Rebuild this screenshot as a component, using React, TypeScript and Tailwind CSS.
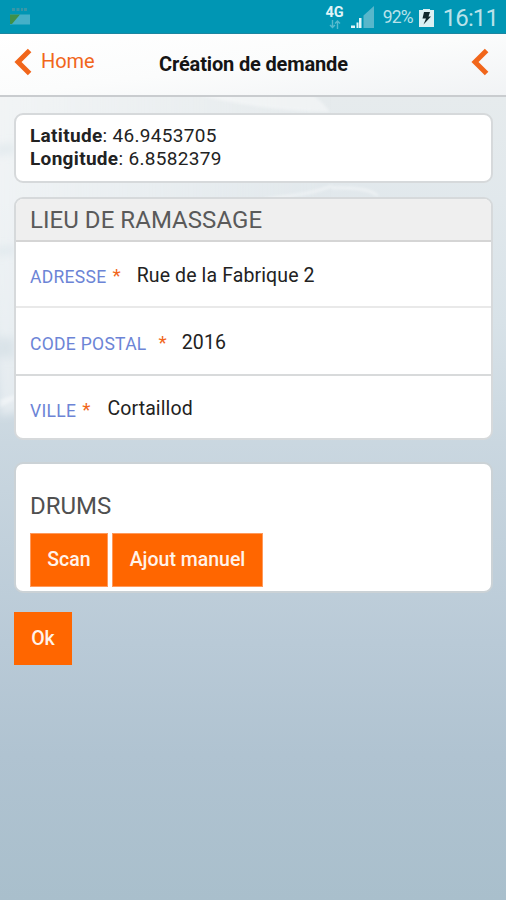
import { useState } from "react";

const fields = [
  { label: "ADRESSE", value: "Rue de la Fabrique 2", row: "h-[66px] border-b-2 border-[#e9e9e9]", gap: "ml-[6px]", valueGap: "ml-[16px]" },
  { label: "CODE POSTAL", value: "2016", row: "h-[68px] border-b-2 border-[#d8dadb]", gap: "ml-[12px]", valueGap: "ml-[15px]" },
  { label: "VILLE", value: "Cortaillod", row: "h-[63px]", gap: "ml-[6px]", valueGap: "ml-[17px]" },
];

function Chevron() {
  return (
    <svg width="18" height="28" viewBox="0 0 18 28" fill="none" stroke="#f1661b" strokeWidth="5">
      <path d="M15.6 2.4 L4 14 L15.6 25.6" />
    </svg>
  );
}

function StatusBar() {
  return (
    <div className="flex h-[34px] items-center border-b border-[#1c86a0] bg-[#0096b4] pl-[9px] pr-[8px] text-[#b9e2ea]">
      <svg width="22" height="20" viewBox="0 0 22 20">
        <path d="M3 1h3v3h-3zM7.500 1h3v3h-3zM12 1h2v3h-2zM15 1h3v3h-3z" fill="#5e98a0" opacity=".6" />
        <path d="M1 7.500h20v10H1z" fill="#45b0c8" />
        <path d="M1 7.500h10l-8 9.500H1z" fill="#3f9048" />
      </svg>
      <div className="ml-auto flex flex-col items-center">
        <span className="text-[14.500px] font-bold leading-[15px] text-[#dff4f8]">4G</span>
        <svg width="12" height="9" viewBox="0 0 12 9" fill="none" stroke="#58bacd" strokeWidth="1.400">
          <path d="M3.500 0v7.500M1 5l2.500 2.500L6 5M8.500 9V1M6 3.500L8.500 1 11 3.500" />
        </svg>
      </div>
      <svg className="ml-[7px] mt-[2px]" width="24" height="23" viewBox="0 0 24 23">
        <path d="M12.500 22V9.500L23 0v22z" fill="#58b7cb" />
        <path d="M0 19.500h4V22H0zM5.500 16.500h2V22h-2zM8 12h2.500v10h-2.500z" fill="#e4f6f9" />
      </svg>
      <span className="ml-[8px] mt-[2px] text-[17.500px] tracking-[-0.8px]">92%</span>
      <svg className="ml-[6px] mt-[2px]" width="15" height="18" viewBox="0 0 15 18">
        <path d="M0 1h4V0h7v1h4v17H0z" fill="#dcf0f3" />
        <path d="M5 3h6L9.500 7.500H12L4.500 15.500 7 9.500H3.500z" fill="#10272c" />
      </svg>
      <span className="ml-[9px] mt-[2px] text-[24px] leading-[32px] tracking-[-0.9px]">16:11</span>
    </div>
  );
}

function Backdrop() {
  return (
    <svg className="absolute inset-0 h-full w-full" viewBox="0 0 506 804" preserveAspectRatio="none">
      <defs>
        <linearGradient id="sky" x1="0" y1="0" x2="0" y2="1">
          <stop offset="0" stopColor="#e6ebed" />
          <stop offset=".13" stopColor="#e1e8ec" />
          <stop offset=".28" stopColor="#d8e2e8" />
          <stop offset=".43" stopColor="#cad7e0" />
          <stop offset=".68" stopColor="#b9cad7" />
          <stop offset=".82" stopColor="#b0c3d1" />
          <stop offset="1" stopColor="#a9bfcc" />
        </linearGradient>
        <linearGradient id="glow" x1="0" y1="0" x2="1" y2="0">
          <stop offset="0" stopColor="#fff" stopOpacity=".5" />
          <stop offset="1" stopColor="#fff" stopOpacity="0" />
        </linearGradient>
        <filter id="soft" x="-20%" y="-20%" width="140%" height="140%">
          <feGaussianBlur stdDeviation="4" />
        </filter>
        <filter id="haze" x="-20%" y="-50%" width="140%" height="200%">
          <feGaussianBlur stdDeviation="1.5" />
        </filter>
      </defs>
      <path d="M0 0h506v804H0z" fill="url(#sky)" />
      <path d="M-20 -10H330V240L0 320z" fill="url(#glow)" filter="url(#soft)" />
      <path d="M190 -4H310Q322 4 330 15 260 14 190 -4z" fill="#fff" opacity=".4" filter="url(#haze)" />
      <path d="M265 102Q310 98 332 89M332 91Q368 90 378 99" fill="none" stroke="#fff" strokeWidth="2" opacity=".6" filter="url(#haze)" />
      <g fill="none" stroke="#c5d4dd" filter="url(#soft)">
        <path d="M-5 54L15 51" strokeWidth="10" opacity=".3" />
        <path d="M-5 155L15 153" strokeWidth="8" opacity=".3" />
        <path d="M-5 250L15 252" strokeWidth="20" opacity=".4" />
      </g>
      <path d="M0 303L15 298V303L0 311z" fill="#fff" opacity=".4" filter="url(#haze)" />
    </svg>
  );
}

export default function App() {
  const [address, setAddress] = useState(fields);

  const updateField = (label: string, value: string) =>
    setAddress((current) => current.map((field) => (field.label === label ? { ...field, value } : field)));

  return (
    <div className="flex h-[900px] w-[506px] flex-col overflow-hidden font-[Roboto,sans-serif] text-[#222]">
      <StatusBar />

      <header className="flex h-[63px] items-start justify-between border-b-2 border-[#c9cccf] bg-gradient-to-br from-white via-[#fbfcfc] to-[#f1f3f5] pl-[14px] pr-[17px] pt-[14px]">
        <button type="button" className="flex w-[145px] items-start text-[#f1661b]">
          <Chevron />
          <span className="ml-[9px] text-[20px] leading-[27px] tracking-[-0.1px]">Home</span>
        </button>
        <h1 className="mr-auto whitespace-nowrap text-[20px] font-bold leading-[32px] tracking-[-0.15px] text-[#151515]">
          Création de demande
        </h1>
        <button type="button" aria-label="Menu">
          <Chevron />
        </button>
      </header>

      <main className="relative grow">
        <Backdrop />
        <div className="relative flex flex-col items-start pl-[14px] pr-[13px] pt-[16px]">
          <section className="h-[70px] w-full rounded-[9px] border-2 border-[#d6d9db] bg-white px-[14px] pt-[10px] text-[19px] leading-[22.500px] tracking-[0.32px]">
            <p><b>Latitude</b>: 46.9453705</p>
            <p><b>Longitude</b>: 6.8582379</p>
          </section>

          <section className="mt-[14px] h-[243px] w-full overflow-hidden rounded-[9px] border-2 border-[#d6d9db] bg-white">
            <h2 className="h-[43px] border-b-2 border-[#d5d5d5] bg-[#efefef] px-[14px] text-[24px] leading-[43px] tracking-[0.05px] text-[#5a5a5a]">
              LIEU DE RAMASSAGE
            </h2>
            {address.map((field) => (
              <label key={field.label} className={`flex items-center px-[14px] ${field.row}`}>
                <span className="whitespace-nowrap pt-[7px] text-[17.500px] tracking-[0.3px] text-[#6c84d6]">{field.label}</span>
                <span className={`pt-[5px] text-[19px] text-[#f1661b] ${field.gap}`}>*</span>
                <input
                  className={`min-w-0 grow bg-transparent pt-[3px] text-[19.500px] tracking-[0.12px] outline-none ${field.valueGap}`}
                  value={field.value}
                  onChange={(event) => updateField(field.label, event.target.value)}
                />
              </label>
            ))}
          </section>

          <section className="mt-[22px] h-[131px] w-full rounded-[9px] border-2 border-[#cbd2d6] bg-white px-[14px] pt-[26px]">
            <h2 className="text-[24px] leading-[32px] text-[#505050]">DRUMS</h2>
            <div className="mt-[11px] flex gap-[4px] text-[19.500px] font-medium text-[#fff3ea]">
              <button type="button" className="h-[54px] w-[78px] border border-[#ff9a5c] bg-[#ff6600]">Scan</button>
              <button type="button" className="h-[54px] w-[151px] border border-[#ff9a5c] bg-[#ff6600]">Ajout manuel</button>
            </div>
          </section>

          <button type="button" className="mt-[19px] h-[53px] w-[58px] bg-[#ff6600] text-[19.500px] font-medium text-[#fff3ea]">
            Ok
          </button>
        </div>
      </main>
    </div>
  );
}
